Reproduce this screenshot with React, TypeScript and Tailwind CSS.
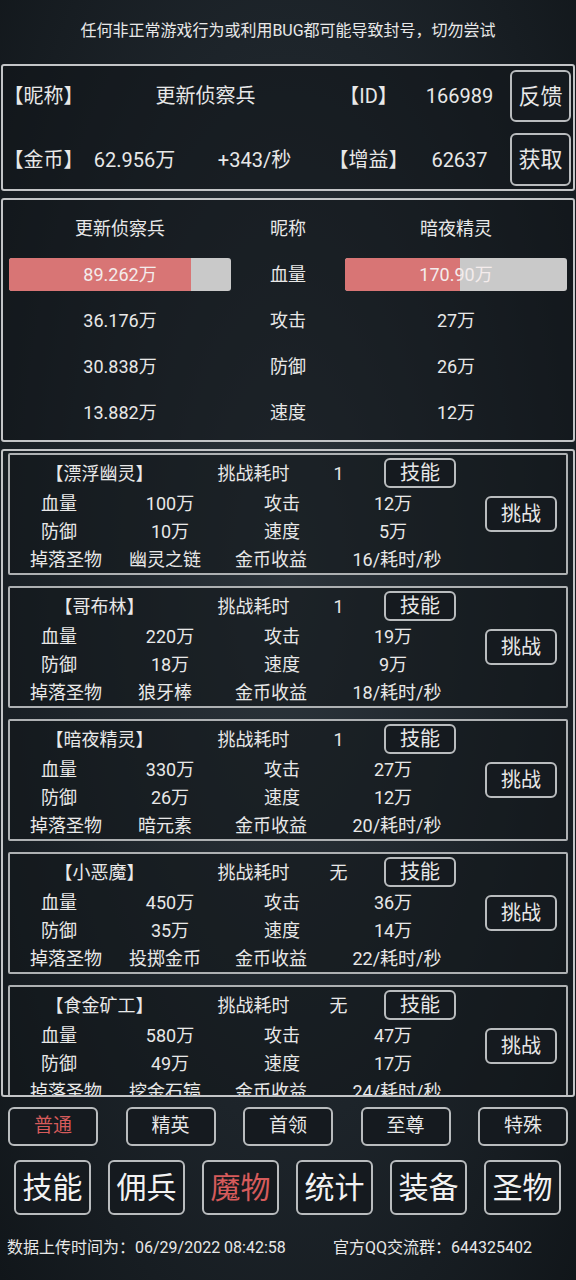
import React from "react"

const FONT = "font-['Roboto','Noto_Sans_CJK_SC',sans-serif]"

type Monster = {
  name: string
  time: string
  hp: string
  atk: string
  def: string
  spd: string
  drop: string
  gold: string
}

const monsters: Monster[] = [
  { name: "【漂浮幽灵】", time: "1", hp: "100万", atk: "12万", def: "10万", spd: "5万", drop: "幽灵之链", gold: "16/耗时/秒" },
  { name: "【哥布林】", time: "1", hp: "220万", atk: "19万", def: "18万", spd: "9万", drop: "狼牙棒", gold: "18/耗时/秒" },
  { name: "【暗夜精灵】", time: "1", hp: "330万", atk: "27万", def: "26万", spd: "12万", drop: "暗元素", gold: "20/耗时/秒" },
  { name: "【小恶魔】", time: "无", hp: "450万", atk: "36万", def: "35万", spd: "14万", drop: "投掷金币", gold: "22/耗时/秒" },
  { name: "【食金矿工】", time: "无", hp: "580万", atk: "47万", def: "49万", spd: "17万", drop: "挖金石镐", gold: "24/耗时/秒" },
]

const btn = "flex items-center justify-center border-2 border-[#b9bcbe] rounded-[6px] bg-[#151a1f]"

function Cell({ w, children, className = "" }: { w: string; children: React.ReactNode; className?: string }) {
  return <div className={`${w} flex justify-center whitespace-nowrap ${className}`}>{children}</div>
}

function HpBar({ value, pct }: { value: string; pct: number }) {
  return (
    <div className="relative w-[222px] h-[33px] rounded-[3px] bg-[#c9c9c9] overflow-hidden">
      <div className="absolute inset-y-0 left-0 bg-[#d87575]" style={{ width: `${pct}%` }} />
      <div className="relative flex h-full items-center justify-center text-[#f4ecec]">{value}</div>
    </div>
  )
}

function MonsterCard({ m }: { m: Monster }) {
  return (
    <div className="flex h-[122px] shrink-0 border-2 border-[#aeb1b3] rounded-[2px] bg-[#12171b]/60">
      <div className="flex flex-col pt-[3px] text-[18px]">
        <div className="flex h-[30px] items-center">
          <Cell w="w-[179px]">{m.name}</Cell>
          <Cell w="w-[129px]">挑战耗时</Cell>
          <Cell w="w-[41px]">{m.time}</Cell>
          <div className={`${btn} ml-[25px] w-[72px] h-[30px] text-[20px]`}>技能</div>
        </div>
        <div className="mt-[1px] flex h-[28px] items-center">
          <Cell w="w-[98px]">血量</Cell>
          <Cell w="w-[124px]">{m.hp}</Cell>
          <Cell w="w-[100px]">攻击</Cell>
          <Cell w="w-[122px]">{m.atk}</Cell>
        </div>
        <div className="flex h-[28px] items-center">
          <Cell w="w-[98px]">防御</Cell>
          <Cell w="w-[124px]">{m.def}</Cell>
          <Cell w="w-[100px]">速度</Cell>
          <Cell w="w-[122px]">{m.spd}</Cell>
        </div>
        <div className="flex h-[28px] items-center">
          <Cell w="w-[112px]">掉落圣物</Cell>
          <Cell w="w-[86px]">{m.drop}</Cell>
          <Cell w="w-[126px]">金币收益</Cell>
          <Cell w="w-[126px]">{m.gold}</Cell>
        </div>
      </div>
      <div className="ml-auto flex items-center pr-[9px]">
        <div className={`${btn} w-[72px] h-[36px] text-[20px]`}>挑战</div>
      </div>
    </div>
  )
}

export default function App() {
  const tiers = ["普通", "精英", "首领", "至尊", "特殊"]
  const nav = ["技能", "佣兵", "魔物", "统计", "装备", "圣物"]

  return (
    <div
      className={`${FONT} w-[576px] h-[1280px] overflow-hidden text-[#e8e8e8] bg-[radial-gradient(ellipse_at_50%_45%,#2c343b_0%,#1d242a_55%,#11161a_100%)] flex flex-col`}
    >
      {/* notice */}
      <div className="h-[64px] flex items-center justify-center text-[16px] pb-[2px]">
        任何非正常游戏行为或利用BUG都可能导致封号，切勿尝试
      </div>

      {/* player info */}
      <div className="mx-[1px] h-[127px] border-2 border-[#c3c5c7] rounded-[3px] bg-[#0f1418]/50 pt-[4px] pr-[2px] flex flex-col gap-[11px] text-[20px]">
        <div className="flex h-[52px] items-center">
          <Cell w="w-[81px]">【昵称】</Cell>
          <Cell w="w-[243px]">更新侦察兵</Cell>
          <Cell w="w-[83px]">【ID】</Cell>
          <Cell w="w-[99px]">166989</Cell>
          <div className={`${btn} ml-auto w-[61px] h-[52px] text-[22px]`}>反馈</div>
        </div>
        <div className="flex h-[53px] items-center">
          <Cell w="w-[81px]">【金币】</Cell>
          <Cell w="w-[101px]">62.956万</Cell>
          <Cell w="w-[139px]">+343/秒</Cell>
          <Cell w="w-[89px]">【增益】</Cell>
          <Cell w="w-[93px]">62637</Cell>
          <div className={`${btn} ml-auto w-[61px] h-[53px] text-[22px]`}>获取</div>
        </div>
      </div>

      {/* battle compare */}
      <div className="mx-[1px] mt-[7px] h-[244px] border-2 border-[#c3c5c7] rounded-[3px] bg-[#0f1418]/50 py-[5px] text-[18px]">
        <div className="grid grid-cols-[234px_102px_234px] auto-rows-[46px] items-center justify-items-center">
          <div>更新侦察兵</div>
          <div>昵称</div>
          <div>暗夜精灵</div>

          <HpBar value="89.262万" pct={82} />
          <div>血量</div>
          <HpBar value="170.90万" pct={52} />

          <div>36.176万</div>
          <div>攻击</div>
          <div>27万</div>

          <div>30.838万</div>
          <div>防御</div>
          <div>26万</div>

          <div>13.882万</div>
          <div>速度</div>
          <div>12万</div>
        </div>
      </div>

      {/* monster list */}
      <div className="mx-[1px] mt-[7px] h-[648px] border-2 border-[#c3c5c7] rounded-[3px] overflow-hidden px-[5px] pt-[2px] flex flex-col gap-[11px]">
        {monsters.map((m) => (
          <MonsterCard key={m.name} m={m} />
        ))}
      </div>

      {/* tiers */}
      <div className="mt-[10px] px-[8px] flex justify-between">
        {tiers.map((t, i) => (
          <div
            key={t}
            className={`${btn} w-[90px] h-[39px] text-[19px] ${i === 0 ? "text-[#d65b5b]" : ""}`}
          >
            {t}
          </div>
        ))}
      </div>

      {/* main nav */}
      <div className="mt-[14px] pl-[14px] flex gap-[17px]">
        {nav.map((n) => (
          <div
            key={n}
            className={`${btn} w-[77px] h-[55px] text-[30px] ${n === "魔物" ? "text-[#d65b5b]" : "text-[#f2f2f2]"}`}
          >
            {n}
          </div>
        ))}
      </div>

      {/* footer */}
      <div className="mt-[23px] px-[7px] flex text-[16px] h-[20px] items-center">
        <div className="w-[326px] whitespace-nowrap">数据上传时间为：06/29/2022 08:42:58</div>
        <div className="whitespace-nowrap">官方QQ交流群：644325402</div>
      </div>
    </div>
  )
}
